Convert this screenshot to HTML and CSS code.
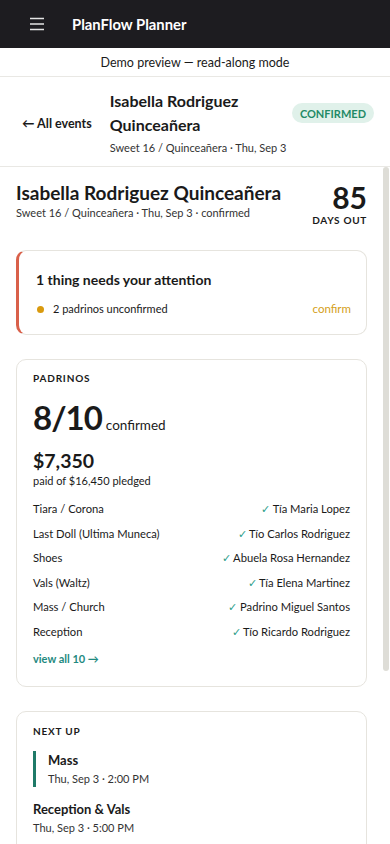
FILE: index.html
```html
<!DOCTYPE html>
<html lang="en">
<head>
<meta charset="utf-8">
<meta name="viewport" content="width=device-width, initial-scale=1">
<title>PlanFlow Planner</title>
<link rel="stylesheet" href="styles.css">
</head>
<body>
<div class="app">
  <header class="topbar">
    <button class="menu-btn" aria-label="Menu">
      <svg width="16" height="14" viewBox="0 0 16 14"><path d="M1 1.5h14M1 7h14M1 12.5h14" stroke="#e4e4e4" stroke-width="1.6" fill="none"/></svg>
    </button>
    <span class="brand">PlanFlow Planner</span>
  </header>
  <div class="demo-bar">Demo preview — read-along mode</div>
  <div class="event-head">
    <a class="back" href="#">← All events</a>
    <div class="event-head-main">
      <div class="event-head-row">
        <h1 class="event-head-title">Isabella Rodriguez Quinceañera</h1>
        <span class="badge">CONFIRMED</span>
      </div>
      <div class="event-head-sub">Sweet 16 / Quinceañera · Thu, Sep 3</div>
    </div>
  </div>
  <div class="viewport">
    <main class="scroll">
      <section class="hero">
        <div class="hero-text">
          <h2 class="hero-title">Isabella Rodriguez Quinceañera</h2>
          <div class="hero-sub">Sweet 16 / Quinceañera · Thu, Sep 3 · confirmed</div>
        </div>
        <div class="countdown">
          <div class="countdown-num">85</div>
          <div class="countdown-label">DAYS OUT</div>
        </div>
      </section>

      <section class="card attention">
        <h3 class="attention-title">1 thing needs your attention</h3>
        <div class="attention-row">
          <span class="dot"></span>
          <span class="attention-text">2 padrinos unconfirmed</span>
          <a class="attention-link" href="#">confirm</a>
        </div>
      </section>

      <section class="card padrinos">
        <div class="card-label">PADRINOS</div>
        <div class="stat">
          <span class="stat-big">8/10</span>
          <span class="stat-unit">confirmed</span>
        </div>
        <div class="money">$7,350</div>
        <div class="money-sub">paid of $16,450 pledged</div>
        <ul class="padrino-list">
          <li class="padrino"><span>Tiara / Corona</span><span class="who"><span class="check">✓</span> Tía Maria Lopez</span></li>
          <li class="padrino"><span>Last Doll (Ultima Muneca)</span><span class="who"><span class="check">✓</span> Tío Carlos Rodriguez</span></li>
          <li class="padrino"><span>Shoes</span><span class="who"><span class="check">✓</span> Abuela Rosa Hernandez</span></li>
          <li class="padrino"><span>Vals (Waltz)</span><span class="who"><span class="check">✓</span> Tía Elena Martinez</span></li>
          <li class="padrino"><span>Mass / Church</span><span class="who"><span class="check">✓</span> Padrino Miguel Santos</span></li>
          <li class="padrino"><span>Reception</span><span class="who"><span class="check">✓</span> Tío Ricardo Rodriguez</span></li>
        </ul>
        <a class="view-all" href="#">view all 10 →</a>
      </section>

      <section class="card next-card">
        <div class="card-label">NEXT UP</div>
        <div class="next-item current">
          <div class="next-title">Mass</div>
          <div class="next-time">Thu, Sep 3 · 2:00 PM</div>
        </div>
        <div class="next-item">
          <div class="next-title">Reception &amp; Vals</div>
          <div class="next-time">Thu, Sep 3 · 5:00 PM</div>
        </div>
      </section>
    </main>
    <div class="thumb"></div>
  </div>
</div>
</body>
</html>
```
FILE: styles.css
```css
* { box-sizing: border-box; }
html, body { margin: 0; padding: 0; height: 100%; }
body {
  font-family: Lato, "Noto Sans", sans-serif;
  color: #1a1a1a;
  background: #fff;
}
.app {
  height: 844px;
  display: flex;
  flex-direction: column;
}
.topbar {
  height: 48px;
  flex: none;
  background: #1d1c20;
  display: flex;
  align-items: center;
  padding: 0 0 0 29px;
  gap: 26px;
}
.menu-btn {
  background: none;
  border: 0;
  padding: 0;
  width: 17px;
  height: 14px;
  display: flex;
}
.brand {
  color: #fff;
  font-weight: 700;
  font-size: 14.8px;
}
.demo-bar {
  flex: none;
  height: 29px;
  display: flex;
  align-items: center;
  justify-content: center;
  font-size: 12.5px;
  color: #1a1a1a;
  border-bottom: 1px solid #e9e8e4;
}
.event-head {
  flex: none;
  display: flex;
  align-items: center;
  padding: 12px 16px 9px 22px;
  gap: 18px;
  border-bottom: 1px solid #e9e8e4;
}
.back {
  color: #1a1a1a;
  text-decoration: none;
  font-size: 12.5px;
  font-weight: 700;
  white-space: nowrap;
}
.event-head-main { flex: 1; min-width: 0; }
.event-head-row {
  display: flex;
  align-items: center;
  gap: 12px;
}
.event-head-title {
  flex: 1;
  margin: 0;
  font-size: 16px;
  line-height: 24px;
  font-weight: 700;
}
.badge {
  flex: none;
  background: #e0f1ea;
  color: #1f8a66;
  font-size: 11px;
  font-weight: 700;
  letter-spacing: 0;
  height: 20px;
  padding: 0 8px;
  border-radius: 10px;
  display: flex;
  align-items: center;
}
.event-head-sub {
  font-size: 11px;
  line-height: 18px;
  margin-top: 2px;
  color: #333;
}
.viewport {
  flex: 1;
  min-height: 0;
  position: relative;
}
.scroll {
  height: 100%;
  overflow-y: auto;
  scrollbar-width: none;
  padding: 0 23px 0 16px;
}
.scroll::-webkit-scrollbar { display: none; }
.thumb {
  position: absolute;
  top: 0;
  right: 1px;
  width: 6px;
  height: 504px;
  background: #deddd7;
  border-radius: 3px;
}
.hero {
  display: flex;
  justify-content: space-between;
  align-items: flex-start;
  padding: 13px 0 24px;
}
.hero-title {
  margin: 0;
  font-size: 19px;
  line-height: 25px;
  font-weight: 700;
}
.hero-sub {
  font-size: 11px;
  line-height: 16px;
  color: #333;
}
.countdown { text-align: right; }
.countdown-num {
  font-size: 30px;
  line-height: 34px;
  font-weight: 700;
}
.countdown-label {
  font-size: 10px;
  font-weight: 700;
  letter-spacing: 0.7px;
  margin-top: 0;
}
.card {
  border: 1px solid #e6e4de;
  border-radius: 10px;
  padding: 12px 16px 16px;
  margin-bottom: 24px;
  background: #fff;
}
.attention {
  border-left: 3px solid #d9604a;
  padding: 18px 15px 15px 17px;
  margin-bottom: 24px;
}
.attention-title {
  margin: 0 0 8px;
  font-size: 14px;
  line-height: 22px;
  font-weight: 700;
}
.attention-row {
  display: flex;
  align-items: center;
  font-size: 11px;
  line-height: 20px;
}
.dot {
  width: 7px;
  height: 7px;
  border-radius: 50%;
  background: #d99a0e;
  margin-right: 9px;
  margin-left: 1px;
}
.attention-text { flex: 1; }
.attention-link {
  color: #d4a020;
  font-size: 11.5px;
  text-decoration: none;
}
.card-label {
  font-size: 10px;
  font-weight: 700;
  letter-spacing: 0.8px;
  line-height: 14px;
}
.padrinos { padding-top: 11px; padding-bottom: 18px; }
.stat {
  display: flex;
  align-items: baseline;
  gap: 4px;
  margin-top: 12px;
}
.stat-big {
  font-size: 33px;
  line-height: 40px;
  font-weight: 700;
  letter-spacing: -1px;
}
.stat-unit { font-size: 13.5px; }
.money {
  margin-top: 11px;
  font-size: 19.5px;
  line-height: 26px;
  font-weight: 700;
}
.money-sub {
  font-size: 11px;
  line-height: 14px;
}
.padrino-list {
  list-style: none;
  margin: 9px 0 0;
  padding: 0;
}
.padrino {
  display: flex;
  justify-content: space-between;
  font-size: 11.2px;
  line-height: 16.6px;
  padding: 4px 0;
}
.check { color: #2a9d8a; }
.view-all {
  display: block;
  margin-top: 5px;
  color: #1f8a80;
  text-decoration: none;
  font-size: 11px;
  font-weight: 700;
  line-height: 18px;
}
.next-card { padding-bottom: 40px; margin-bottom: 0; }
.next-item {
  margin-top: 13px;
}
.next-item + .next-item { margin-top: 13px; }
.next-item.current {
  border-left: 3px solid #1f7a68;
  padding-left: 12px;
}
.next-title {
  font-size: 13px;
  font-weight: 700;
  line-height: 19px;
}
.next-time {
  font-size: 11px;
  line-height: 17px;
  color: #333;
}
```
